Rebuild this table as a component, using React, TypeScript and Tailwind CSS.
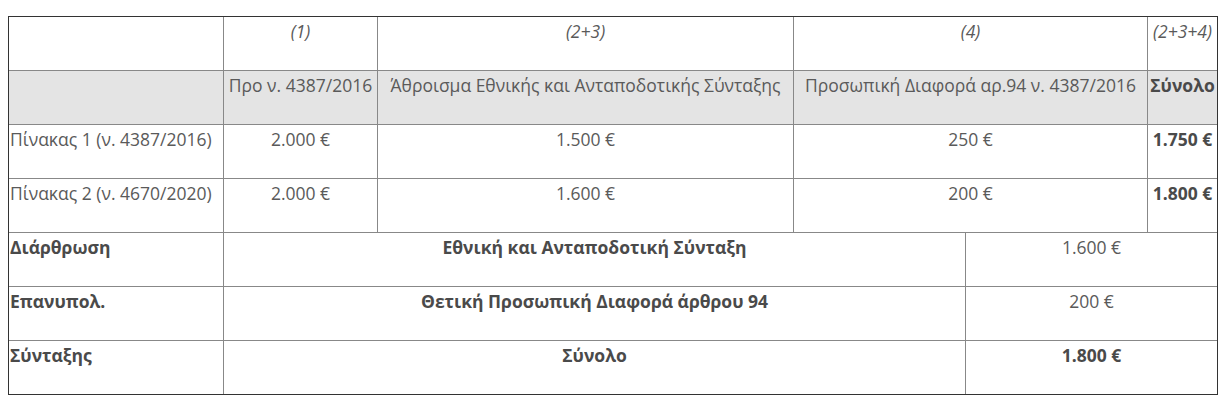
import React from "react";

const W = ["w-[214px]", "w-[154px]", "w-[416px]", "w-[354px]", "w-[70px]"];
const L = ["w-[214px]", "w-[742px]", "w-[252px]"];

type Cell = { t: string; b?: boolean; i?: boolean; left?: boolean };

function Row({ cells, widths, first, gray }: { cells: Cell[]; widths: string[]; first?: boolean; gray?: boolean }) {
  return (
    <div className={`flex ${first ? "h-[53px]" : "h-[54px] border-t border-[#888]"} ${gray ? "bg-[#e4e4e4]" : ""}`}>
      {cells.map((c, k) => (
        <div
          key={k}
          className={`${widths[k]} shrink-0 ${k > 0 ? "border-l border-[#888]" : ""} pt-[2px] leading-[24px] whitespace-nowrap ${
            c.left ? "text-left pl-px" : "text-center"
          } ${c.b ? "font-bold text-[#4a4a4a]" : ""} ${c.i ? "italic" : ""}`}
        >
          {c.t}
        </div>
      ))}
    </div>
  );
}

export default function App() {
  return (
    <div className="bg-white w-[1232px] h-[412px] pt-4 pl-2" style={{ fontFamily: "'Open Sans', sans-serif" }}>
      <div className="w-[1210px] border border-[#333] text-[17.5px] text-[#5a5a5a]">
        <Row
          first
          widths={W}
          cells={[{ t: "" }, { t: "(1)", i: true }, { t: "(2+3)", i: true }, { t: "(4)", i: true }, { t: "(2+3+4)", i: true }]}
        />
        <Row
          gray
          widths={W}
          cells={[
            { t: "" },
            { t: "Προ ν. 4387/2016" },
            { t: "Άθροισμα Εθνικής και Ανταποδοτικής Σύνταξης" },
            { t: "Προσωπική Διαφορά αρ.94 ν. 4387/2016" },
            { t: "Σύνολο", b: true },
          ]}
        />
        <Row
          widths={W}
          cells={[
            { t: "Πίνακας 1 (ν. 4387/2016)", left: true },
            { t: "2.000 €" },
            { t: "1.500 €" },
            { t: "250 €" },
            { t: "1.750 €", b: true },
          ]}
        />
        <Row
          widths={W}
          cells={[
            { t: "Πίνακας 2 (ν. 4670/2020)", left: true },
            { t: "2.000 €" },
            { t: "1.600 €" },
            { t: "200 €" },
            { t: "1.800 €", b: true },
          ]}
        />
        <Row
          widths={L}
          cells={[{ t: "Διάρθρωση", b: true, left: true }, { t: "Εθνική και Ανταποδοτική Σύνταξη", b: true }, { t: "1.600 €" }]}
        />
        <Row
          widths={L}
          cells={[{ t: "Επανυπολ.", b: true, left: true }, { t: "Θετική Προσωπική Διαφορά άρθρου 94", b: true }, { t: "200 €" }]}
        />
        <Row
          widths={L}
          cells={[{ t: "Σύνταξης", b: true, left: true }, { t: "Σύνολο", b: true }, { t: "1.800 €", b: true }]}
        />
      </div>
    </div>
  );
}
